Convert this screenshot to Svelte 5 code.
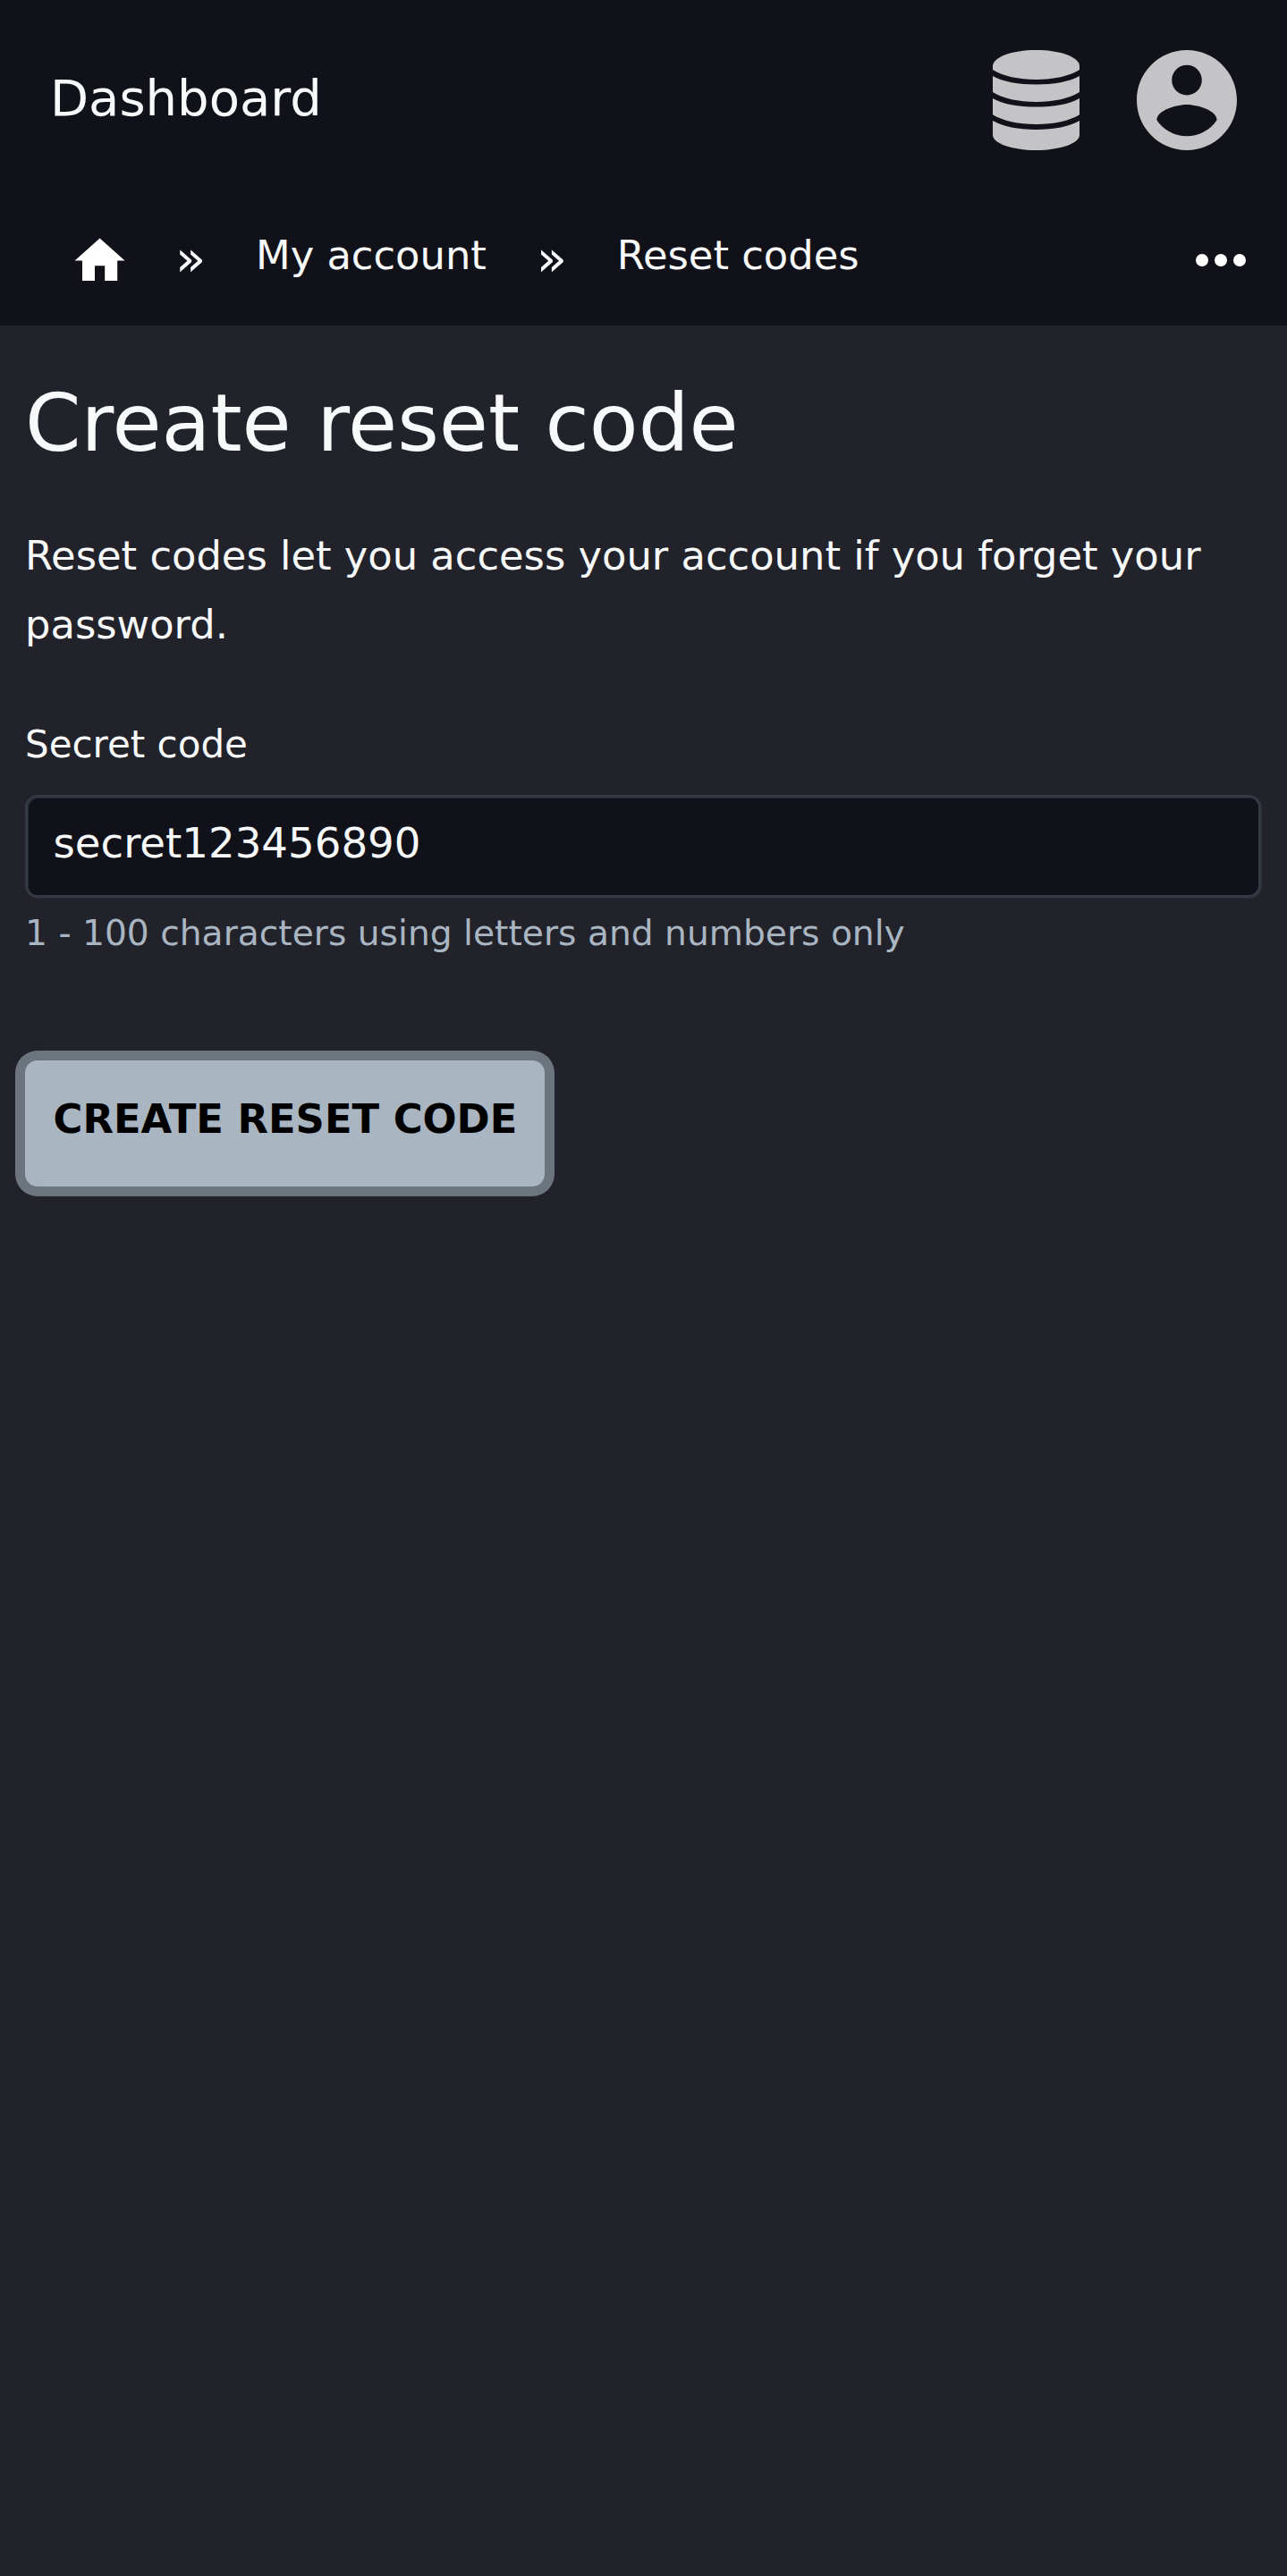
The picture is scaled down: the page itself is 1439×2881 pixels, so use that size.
<script>
  let code = $state('secret123456890');
</script>

<div class="page">
  <header>
    <div class="topbar">
      <a class="brand" href="#top">Dashboard</a>
      <svg class="database" viewBox="0 0 97 112" aria-hidden="true">
        <path d="M0 18C0 8 21 0 48.5 0S97 8 97 18V22C86 29 68 33 48.5 33S11 29 0 22Z" />
        <path d="M0 29C11 35.500 29 38.500 48.500 38.500S86 35.500 97 29V47C86 54 68 58 48.500 58S11 54 0 47Z" />
        <path d="M0 54C11 60.500 29 63.600 48.500 63.600S86 60.500 97 54V72.200C86 79 68 83 48.500 83S11 79 0 72.200Z" />
        <path d="M0 79C11 85.500 29 89 48.500 89S86 85.500 97 79V95C97 104 76 112 48.500 112S0 104 0 95Z" />
      </svg>
      <svg class="account" viewBox="2 2 20 20" aria-hidden="true">
        <path d="M12 2C6.480 2 2 6.480 2 12s4.480 10 10 10 10-4.480 10-10S17.520 2 12 2zm0 3c1.660 0 3 1.340 3 3s-1.340 3-3 3-3-1.340-3-3 1.340-3 3-3zm0 14.200c-2.500 0-4.710-1.280-6-3.220.03-1.990 4-3.080 6-3.080 1.990 0 5.970 1.090 6 3.080-1.290 1.940-3.500 3.220-6 3.220z" />
      </svg>
    </div>
    <nav>
      <svg class="home" viewBox="0 0 24 24" aria-hidden="true"><path d="M10 20v-6h4v6h5v-8h3L12 3 2 12h3v8z" /></svg>
      <span class="sep">»</span>
      <a href="#account">My account</a>
      <span class="sep">»</span>
      <a href="#codes">Reset codes</a>
      <svg class="more" viewBox="0 0 24 24" aria-hidden="true"><circle cx="6" cy="12" r="2" /><circle cx="12" cy="12" r="2" /><circle cx="18" cy="12" r="2" /></svg>
    </nav>
  </header>
  <main>
    <h1>Create reset code</h1>
    <p>Reset codes let you access your account if you forget your password.</p>
    <label for="code">Secret code</label>
    <input id="code" type="text" bind:value={code} />
    <small>1 - 100 characters using letters and numbers only</small>
    <button type="button">Create reset code</button>
  </main>
</div>

<style>
  :global(body) { background: #22222b; }
  .page {
    min-height: 2881px;
    background: #22222b;
    color: #f8f9fa;
    font-family: "DejaVu Sans", sans-serif;
    font-size: 44.8px;
  }
  header { height: 364px; background: #11111a; }
  a { color: inherit; text-decoration: none; }
  .topbar { display: flex; align-items: center; height: 224px; padding: 0 56px; box-sizing: border-box; }
  .brand { flex: 1; font-size: 56px; line-height: 84px; padding-bottom: 4px; }
  svg { display: block; flex: none; fill: #fff; }
  .database { width: 97px; height: 112px; fill: #c4c4c6; margin-right: 64px; }
  .account { width: 112px; height: 112px; fill: #c4c4c6; }
  nav { display: flex; align-items: center; height: 140px; padding: 0 32px 0 78.400px; box-sizing: border-box; }
  nav a { line-height: 78px; padding-bottom: 17px; }
  .home { width: 67.200px; height: 67.200px; margin: 0 -5.600px 4px 0; }
  .sep { font-size: 56px; line-height: 84px; width: 34px; margin: 0 56px; padding-bottom: 10px; }
  .more { width: 84px; height: 84px; margin: 0 0 7px auto; }
  main { display: flex; flex-direction: column; align-items: flex-start; padding: 56px 28px 0; }
  h1 { margin: 0; font-size: 89.600px; font-weight: 400; line-height: 106px; }
  p { margin: 57px 0 0; line-height: 77px; }
  label { margin: 65px 0 0; font-size: 42px; line-height: 61px; }
  input {
    width: 1382px; height: 115px; margin-top: 26px; padding: 0 28px 7px 28.500px;
    box-sizing: border-box; border: 3px solid #343a43; border-radius: 14px; outline: 0;
    box-shadow: 1px 1px 0 #2a2d35, inset 1px 1px 0 #262a33;
    background: #11111a; color: #f8f9fa; font: 46.667px "DejaVu Sans", sans-serif;
  }
  small { margin-top: 9px; font-size: 39.200px; line-height: 61px; color: #a9b5c1; }
  button {
    width: 581px; height: 141px; margin-top: 112px; padding: 0 0 10px 1px; border: 0; border-radius: 14px;
    background: #a9b5c1; box-shadow: 0 0 0 11px #6c747d; color: #000;
    font: bold 44.800px "DejaVu Sans", sans-serif; text-transform: uppercase; white-space: nowrap;
  }
</style>
